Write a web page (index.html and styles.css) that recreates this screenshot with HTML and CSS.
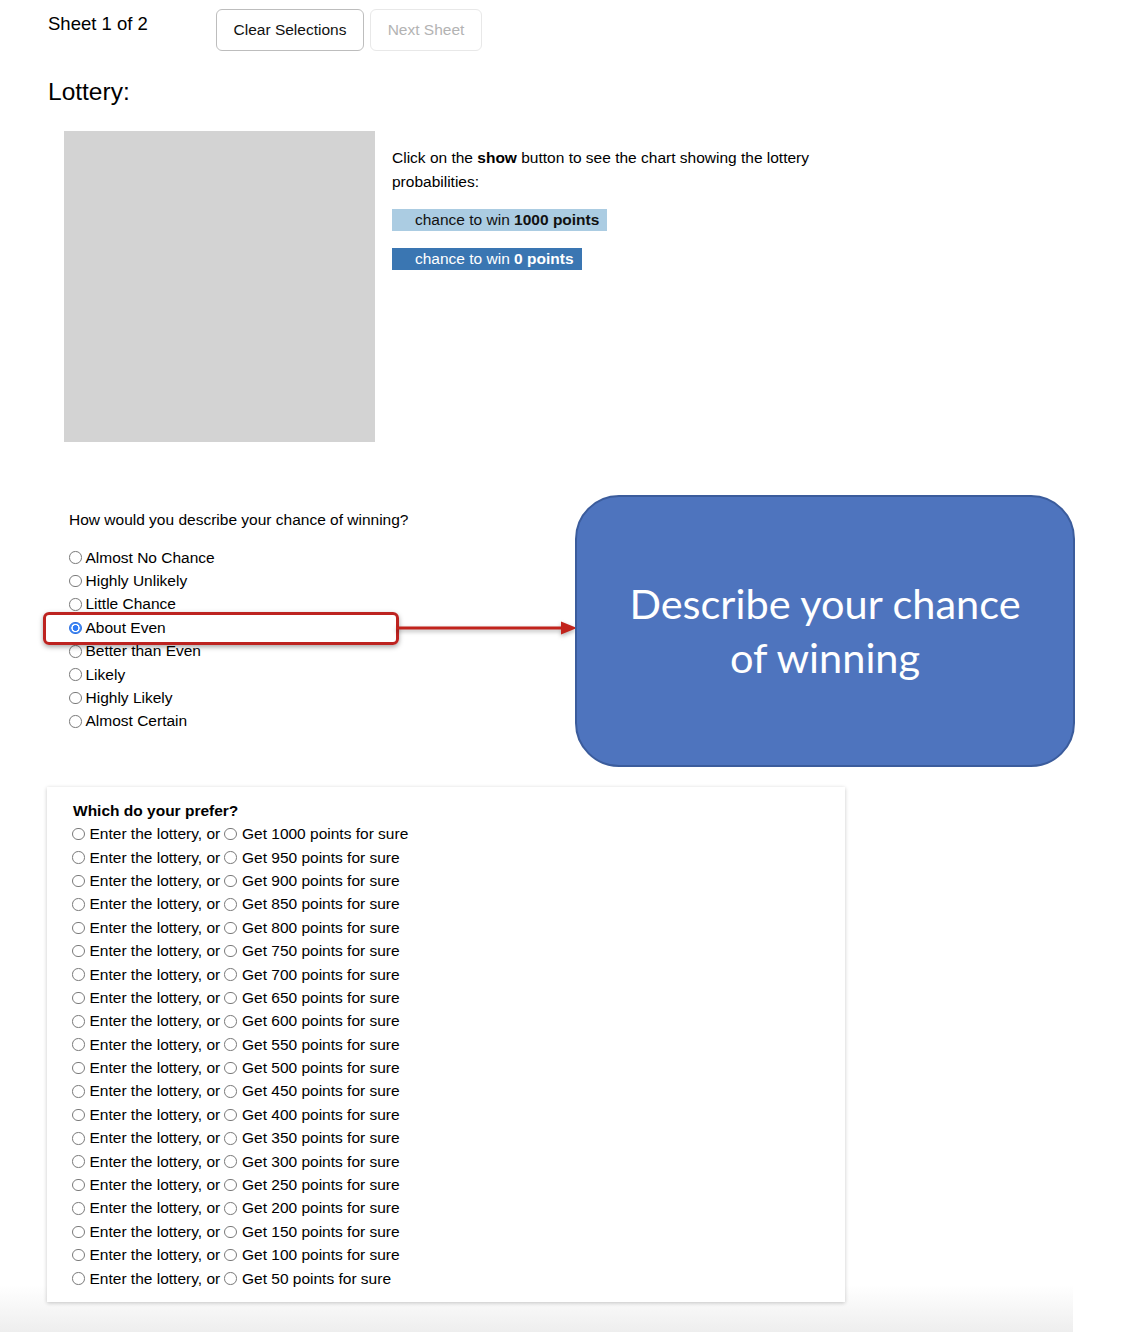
FILE: index.html
```html
<!DOCTYPE html>
<html>
<head>
<meta charset="utf-8">
<link rel="stylesheet" href="styles.css">
</head>
<body>
<div class="page">
  <div class="topbar">
    <div class="sheet-label">Sheet 1 of 2</div>
    <button class="btn">Clear Selections</button>
    <button class="btn btn-disabled">Next Sheet</button>
  </div>

  <h1 class="title">Lottery:</h1>

  <div class="lottery-row">
    <div class="chart-box"></div>
    <div class="lottery-info">
      <p class="instructions">Click on the <b>show</b> button to see the chart showing the lottery probabilities:</p>
      <div class="legend legend-light">chance to win <b>1000 points</b></div>
      <div class="legend legend-dark">chance to win <b>0 points</b></div>
    </div>
  </div>

  <div class="describe">
    <div class="question">How would you describe your chance of winning?</div>
    <div class="options">
      <label class="opt"><input type="radio" name="d" class="radio">Almost No Chance</label>
      <label class="opt"><input type="radio" name="d" class="radio">Highly Unlikely</label>
      <label class="opt"><input type="radio" name="d" class="radio">Little Chance</label>
      <label class="opt"><input type="radio" name="d" class="radio" checked>About Even</label>
      <label class="opt"><input type="radio" name="d" class="radio">Better than Even</label>
      <label class="opt"><input type="radio" name="d" class="radio">Likely</label>
      <label class="opt"><input type="radio" name="d" class="radio">Highly Likely</label>
      <label class="opt"><input type="radio" name="d" class="radio">Almost Certain</label>
    </div>
  </div>

  <div class="pref-card">
    <div class="pref-title">Which do your prefer?</div>
    <div class="pref-row"><input type="radio" name="p1" class="radio r1">Enter the lottery, or <input type="radio" name="p1" class="radio r2">Get 1000 points for sure</div>
    <div class="pref-row"><input type="radio" name="p2" class="radio r1">Enter the lottery, or <input type="radio" name="p2" class="radio r2">Get 950 points for sure</div>
    <div class="pref-row"><input type="radio" name="p3" class="radio r1">Enter the lottery, or <input type="radio" name="p3" class="radio r2">Get 900 points for sure</div>
    <div class="pref-row"><input type="radio" name="p4" class="radio r1">Enter the lottery, or <input type="radio" name="p4" class="radio r2">Get 850 points for sure</div>
    <div class="pref-row"><input type="radio" name="p5" class="radio r1">Enter the lottery, or <input type="radio" name="p5" class="radio r2">Get 800 points for sure</div>
    <div class="pref-row"><input type="radio" name="p6" class="radio r1">Enter the lottery, or <input type="radio" name="p6" class="radio r2">Get 750 points for sure</div>
    <div class="pref-row"><input type="radio" name="p7" class="radio r1">Enter the lottery, or <input type="radio" name="p7" class="radio r2">Get 700 points for sure</div>
    <div class="pref-row"><input type="radio" name="p8" class="radio r1">Enter the lottery, or <input type="radio" name="p8" class="radio r2">Get 650 points for sure</div>
    <div class="pref-row"><input type="radio" name="p9" class="radio r1">Enter the lottery, or <input type="radio" name="p9" class="radio r2">Get 600 points for sure</div>
    <div class="pref-row"><input type="radio" name="p10" class="radio r1">Enter the lottery, or <input type="radio" name="p10" class="radio r2">Get 550 points for sure</div>
    <div class="pref-row"><input type="radio" name="p11" class="radio r1">Enter the lottery, or <input type="radio" name="p11" class="radio r2">Get 500 points for sure</div>
    <div class="pref-row"><input type="radio" name="p12" class="radio r1">Enter the lottery, or <input type="radio" name="p12" class="radio r2">Get 450 points for sure</div>
    <div class="pref-row"><input type="radio" name="p13" class="radio r1">Enter the lottery, or <input type="radio" name="p13" class="radio r2">Get 400 points for sure</div>
    <div class="pref-row"><input type="radio" name="p14" class="radio r1">Enter the lottery, or <input type="radio" name="p14" class="radio r2">Get 350 points for sure</div>
    <div class="pref-row"><input type="radio" name="p15" class="radio r1">Enter the lottery, or <input type="radio" name="p15" class="radio r2">Get 300 points for sure</div>
    <div class="pref-row"><input type="radio" name="p16" class="radio r1">Enter the lottery, or <input type="radio" name="p16" class="radio r2">Get 250 points for sure</div>
    <div class="pref-row"><input type="radio" name="p17" class="radio r1">Enter the lottery, or <input type="radio" name="p17" class="radio r2">Get 200 points for sure</div>
    <div class="pref-row"><input type="radio" name="p18" class="radio r1">Enter the lottery, or <input type="radio" name="p18" class="radio r2">Get 150 points for sure</div>
    <div class="pref-row"><input type="radio" name="p19" class="radio r1">Enter the lottery, or <input type="radio" name="p19" class="radio r2">Get 100 points for sure</div>
    <div class="pref-row"><input type="radio" name="p20" class="radio r1">Enter the lottery, or <input type="radio" name="p20" class="radio r2">Get 50 points for sure</div>
  </div>

  <div class="highlight"></div>
  <svg class="arrow" width="184" height="20" viewBox="0 0 184 20">
    <line x1="0" y1="8" x2="168" y2="8" stroke="#c1231c" stroke-width="3"/>
    <polygon points="165,1.5 181,8 165,14.5" fill="#c1231c"/>
  </svg>
  <div class="callout">Describe your chance<br>of winning</div>
</div>
</body>
</html>
```

FILE: styles.css
```css
html, body {
  margin: 0;
  padding: 0;
  background: #fff;
}

body {
  font-family: "Liberation Sans", Arial, sans-serif;
  color: #000;
}

.page {
  position: relative;
  width: 1073px;
  min-height: 1332px;
  display: flex;
  flex-direction: column;
  align-items: flex-start;
  background: linear-gradient(to bottom, #ffffff 0, #ffffff 1285px, #eeeeee 1332px);
}

.topbar {
  display: flex;
  align-items: flex-start;
  padding: 9px 0 0 48px;
}

.sheet-label {
  width: 168px;
  font-size: 18.5px;
  line-height: 22px;
  margin-top: 4px;
}

.btn {
  height: 42px;
  box-sizing: border-box;
  font-family: "Liberation Sans", Arial, sans-serif;
  font-size: 15.5px;
  color: #111;
  background: #fff;
  border: 1.5px solid #bdbdbd;
  border-radius: 6px;
  padding: 0 16px;
  margin-right: 6px;
  width: 148px;
}

.btn-disabled {
  width: 112px;
  color: #b3b3b3;
  border-color: #e8e8e8;
}

.title {
  margin: 27px 0 0 48px;
  font-size: 24.5px;
  font-weight: normal;
  line-height: 28px;
}

.lottery-row {
  display: flex;
  margin-top: 25px;
  padding-left: 64px;
}

.chart-box {
  width: 311px;
  height: 311px;
  background: #d3d3d3;
}

.lottery-info {
  margin-left: 17px;
  padding-top: 15px;
  width: 440px;
  display: flex;
  flex-direction: column;
  align-items: flex-start;
}

.instructions {
  margin: 0;
  font-size: 15.5px;
  line-height: 23.5px;
}

.legend {
  font-size: 15.5px;
  line-height: 22px;
  height: 22px;
  padding: 0 8px 0 23px;
  margin-top: 16px;
}

.legend + .legend {
  margin-top: 17px;
}

.legend-light {
  background: #abcce2;
  color: #111;
}

.legend-dark {
  background: #3a76b2;
  color: #fff;
}

.describe {
  margin-top: 66px;
  padding-left: 69px;
}

.question {
  font-size: 15.5px;
  line-height: 23px;
}

.options {
  margin-top: 15px;
  display: flex;
  flex-direction: column;
}

.opt {
  display: flex;
  align-items: center;
  height: 23.4px;
  font-size: 15.5px;
}

.radio {
  -webkit-appearance: none;
  appearance: none;
  width: 12.5px;
  height: 12.5px;
  box-sizing: border-box;
  border: 1px solid #7a7a7a;
  border-radius: 50%;
  background: #fff;
  margin: 0 4px 0 0;
  flex: none;
}

.radio:checked {
  border: 1px solid #2c6fe0;
  background: radial-gradient(circle, #2f7cf6 0, #2f7cf6 2.6px, #ffffff 3.1px, #ffffff 3.9px, #4a8ff7 4.4px);
}

.pref-card {
  margin: 54px 0 0 47px;
  width: 798px;
  box-sizing: border-box;
  padding: 12px 0 12px 25px;
  background: #fff;
  box-shadow: 0 1px 4px rgba(0, 0, 0, 0.22);
}

.pref-title {
  font-weight: bold;
  font-size: 15.5px;
  line-height: 23.37px;
  padding-left: 1px;
}

.pref-row {
  display: flex;
  align-items: center;
  height: 23.4px;
  font-size: 15.5px;
  white-space: pre;
}

.pref-row .r1 {
  margin-right: 5px;
}

.pref-row .r2 {
  margin-right: 5px;
}

.highlight {
  position: absolute;
  left: 43px;
  top: 612px;
  width: 356px;
  height: 33px;
  box-sizing: border-box;
  border: 3px solid #bd2320;
  border-radius: 6px;
  box-shadow: 0 2px 5px rgba(0, 0, 0, 0.35);
}

.arrow {
  position: absolute;
  left: 396px;
  top: 620px;
  filter: drop-shadow(0 2px 2px rgba(0, 0, 0, 0.3));
}

.callout {
  position: absolute;
  left: 575px;
  top: 495px;
  width: 500px;
  height: 272px;
  box-sizing: border-box;
  border: 2px solid #3b5c9c;
  border-radius: 44px;
  background: #4e74be;
  color: #fff;
  display: flex;
  align-items: center;
  justify-content: center;
  text-align: center;
  font-family: Lato, "Open Sans", sans-serif;
  font-size: 41.5px;
  line-height: 54px;
  padding-bottom: 2px;
}
```
